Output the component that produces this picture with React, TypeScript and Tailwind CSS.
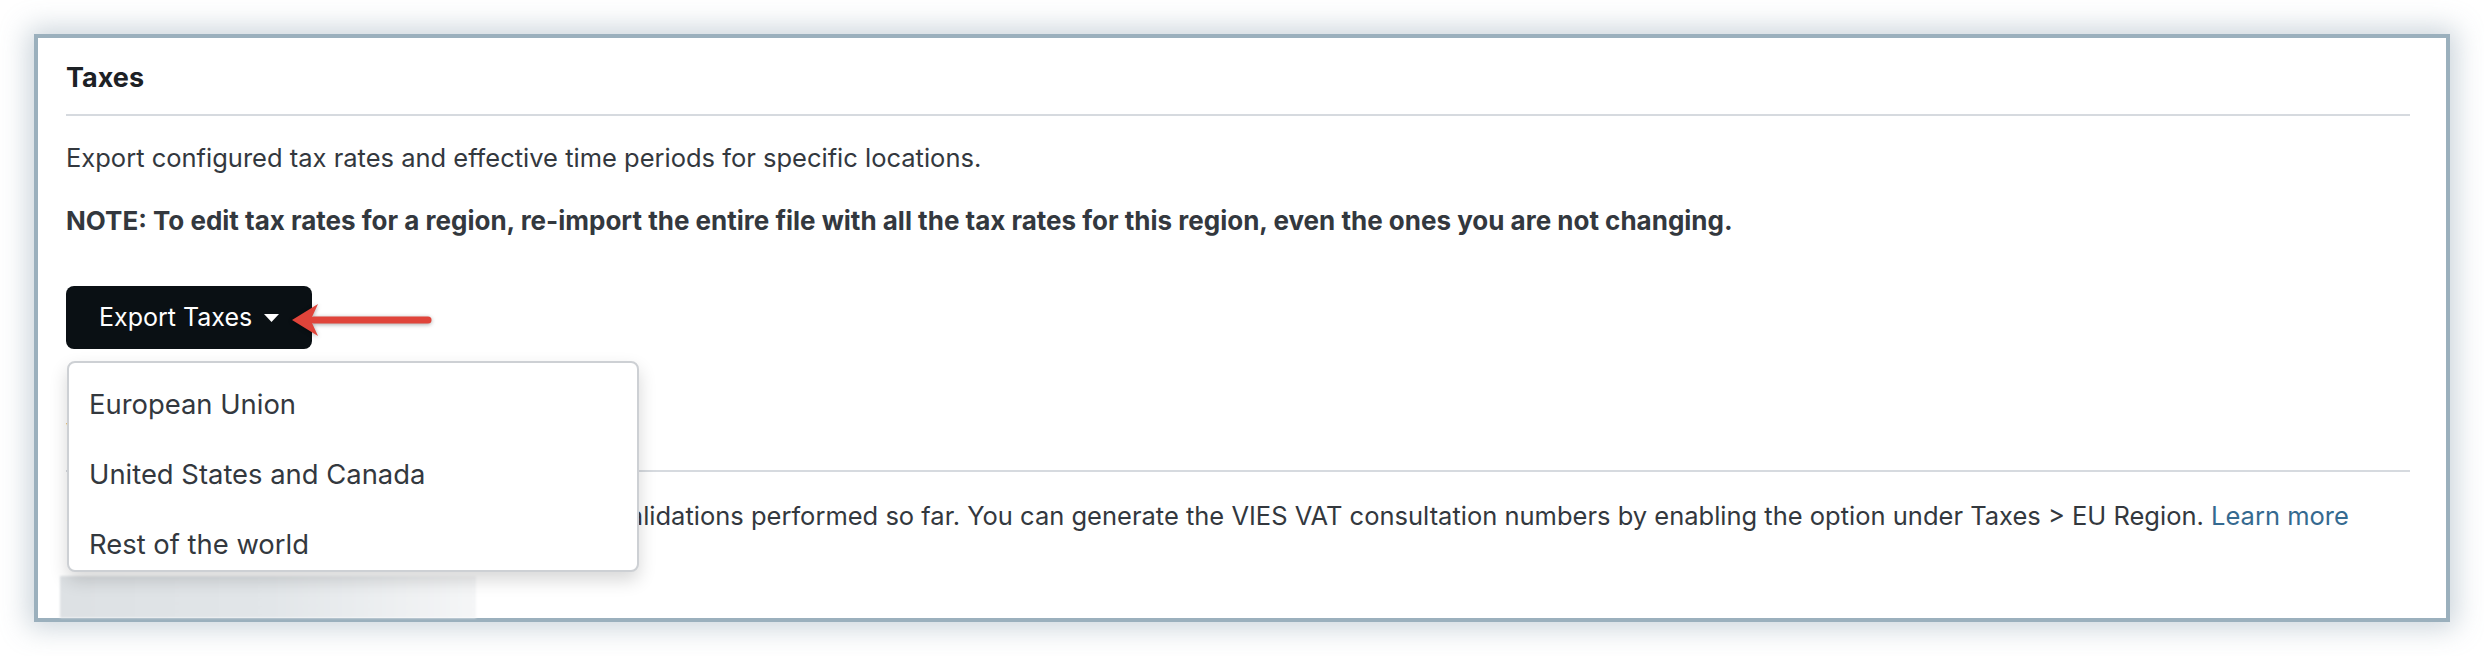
const MENU = ['European Union', 'United States and Canada', 'Rest of the world']

/** dropdown caret */
function Caret() {
  return (
    <svg width="15" height="8" viewBox="0 0 15 8" aria-hidden>
      <path d="M0 0 H15 L7.5 8 Z" fill="#ffffff" />
    </svg>
  )
}

/** red annotation arrow pointing at the button */
function Arrow() {
  return (
    <svg
      width="146"
      height="40"
      viewBox="0 0 146 40"
      className="absolute left-[224px] top-[14px] drop-shadow-[0_1px_2px_rgba(0,0,0,0.35)]"
      aria-hidden
    >
      <line x1="24" y1="20" x2="138" y2="20" stroke="#e0443a" strokeWidth="7" strokeLinecap="round" />
      <path d="M2 20 L28 4 L22 17 L22 23 L28 36 Z" fill="#e0443a" />
    </svg>
  )
}

export default function App() {
  return (
    <div
      className="min-h-screen bg-white p-[34px] text-[#33383e]"
      style={{ fontFamily: 'Inter, "Noto Sans", sans-serif' }}
    >
      <div className="relative w-[2416px] h-[588px] border-4 border-[#9bb0bd] bg-white pl-[28px] pr-[36px] pt-[25px] shadow-[0_0_26px_6px_rgba(140,160,175,0.45)]">
        {/* section: taxes */}
        <h2 className="border-b-2 border-[#d6dadf] pb-[22px] text-[27px] leading-[29px] font-bold text-[#1d2125]">
          Taxes
        </h2>
        <p className="mt-[24px] text-[25.5px] leading-[36px]">
          Export configured tax rates and effective time periods for specific locations.
        </p>
        <p className="mt-[27px] text-[26px] leading-[36px] font-bold">
          NOTE: To edit tax rates for a region, re-import the entire file with all the tax rates for this region, even the ones you are not changing.
        </p>

        <div className="relative mt-[47px]">
          <button className="flex h-[63px] w-[246px] items-center gap-[12px] rounded-[8px] bg-[#0a1014] pl-[33px] text-[25px] text-white">
            Export Taxes <Caret />
          </button>
          <Arrow />

          {/* open menu */}
          <ul className="absolute left-[1px] top-[75px] z-10 h-[211px] w-[572px] overflow-hidden rounded-[8px] border-2 border-[#cdd0d4] bg-white pt-[7px] shadow-[0_8px_18px_rgba(0,0,0,0.16)]">
            {MENU.map((item) => (
              <li key={item} className="flex h-[70px] items-center pl-[20px] text-[27.4px] text-[#33383e]">
                {item}
              </li>
            ))}
          </ul>
        </div>

        {/* section under the menu */}
        <h2 className="mt-[70px] border-b-2 border-[#d6dadf] pb-[22px] text-[27px] leading-[29px] font-bold text-[#1d2125]">
          VIES VAT Validations
        </h2>
        <p className="mt-[26px] text-[25.5px] leading-[36px]">
          Shows the details of all the VIES VAT number validations performed so far. You can generate the VIES VAT consultation numbers by enabling the option under Taxes &gt; EU Region.{' '}
          <a href="#" className="text-[#356a90]">Learn more</a>
        </p>

        {/* redacted control */}
        <div className="absolute bottom-0 left-[22px] h-[42px] w-[416px] bg-gradient-to-r from-[#dde1e4] via-[#e2e6e9] to-[#f5f6f7] blur-[1px]" />
      </div>
    </div>
  )
}
